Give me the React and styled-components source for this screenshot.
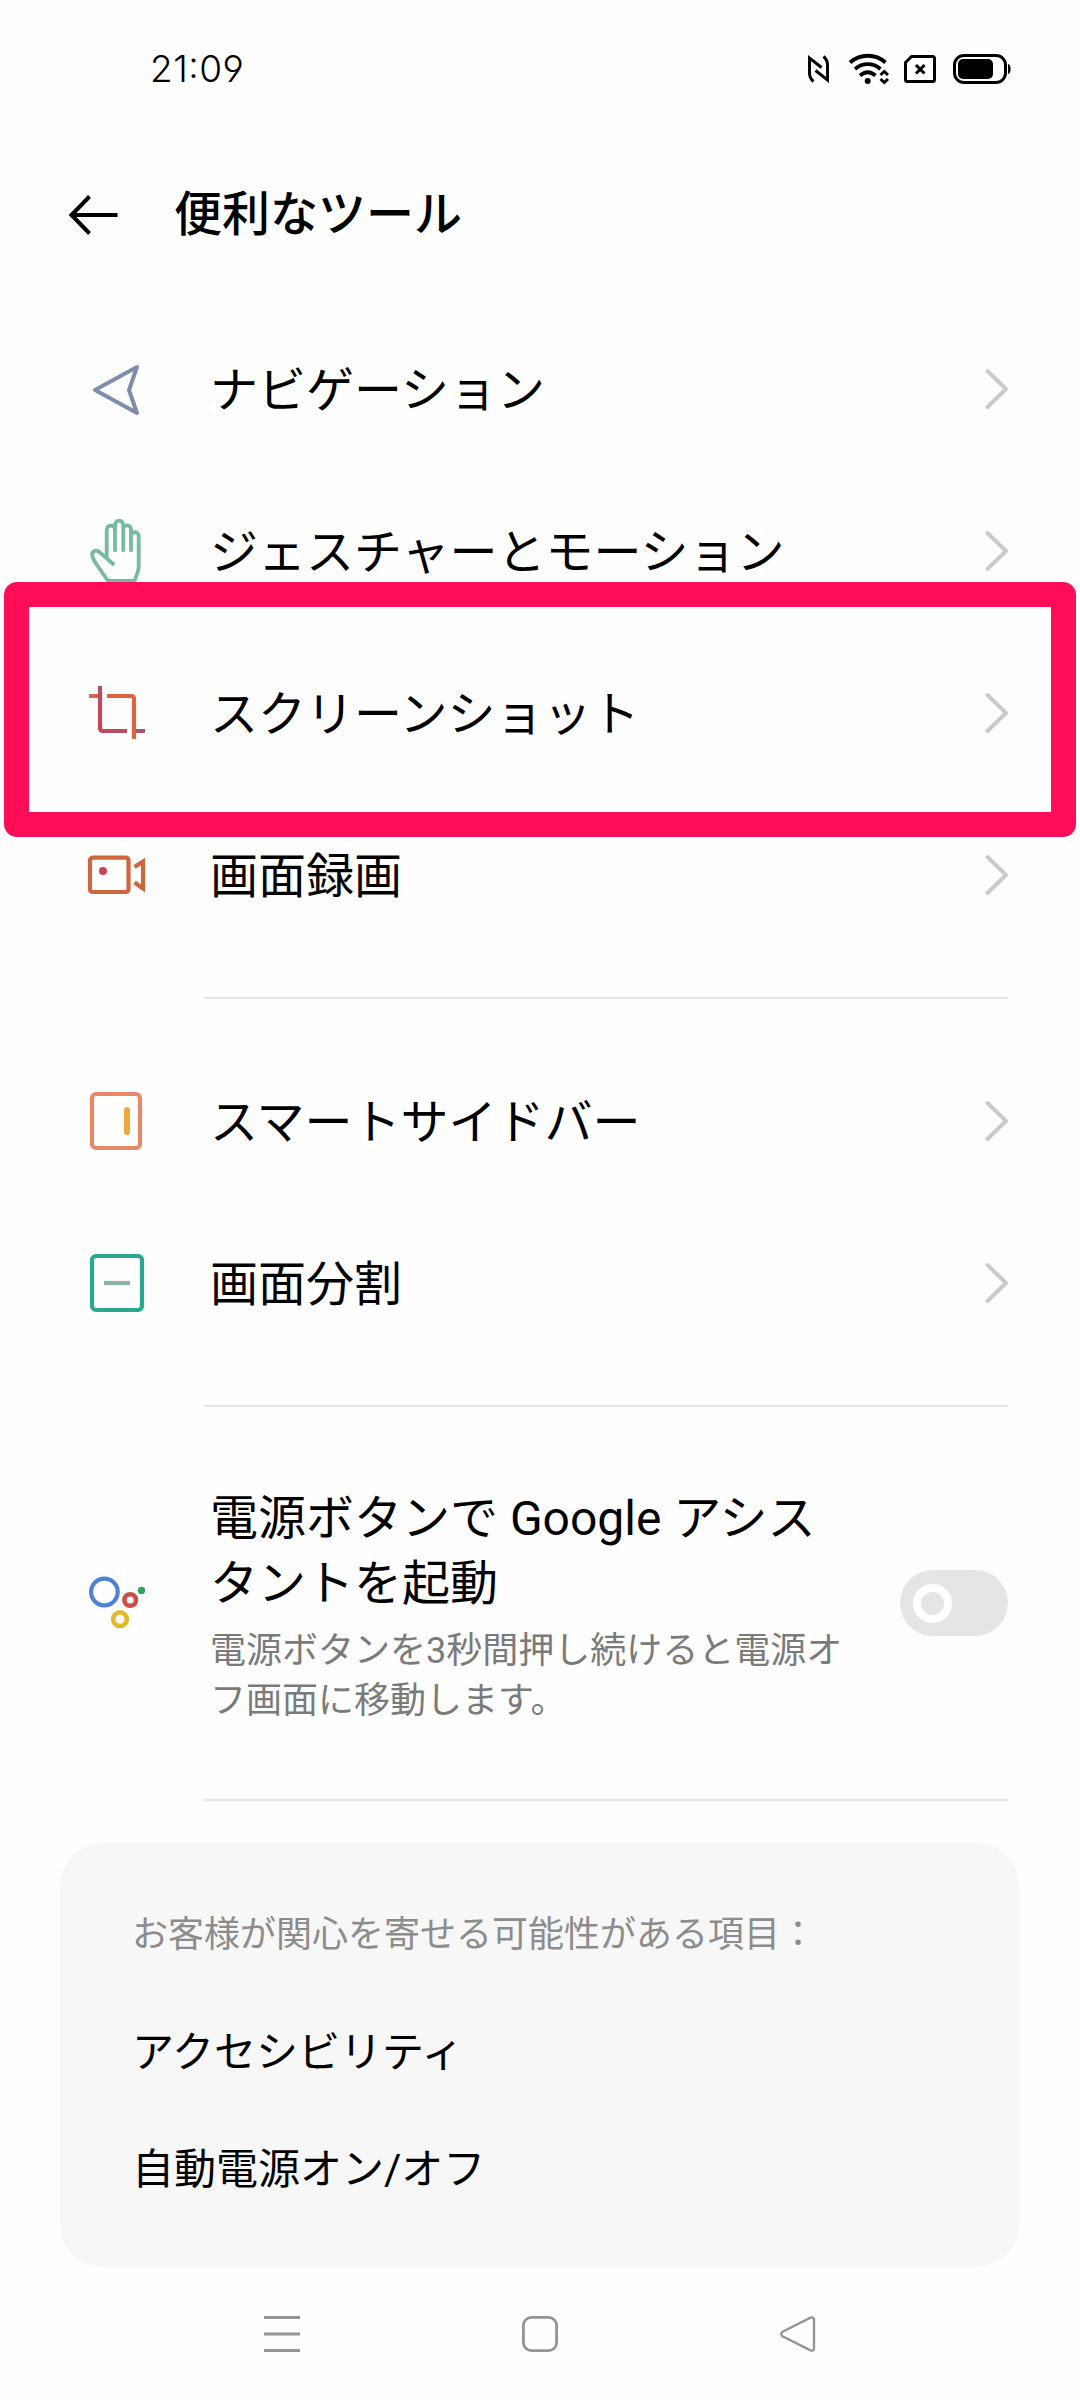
import React from 'react';
import styled, { createGlobalStyle } from 'styled-components';

const GlobalStyle = createGlobalStyle`
  *, *::before, *::after { box-sizing: border-box; }
  body {
    margin: 0;
    background: #fefefe;
    color: #000;
    font-family: Roboto, 'Noto Sans CJK JP', sans-serif;
  }
`;

const Screen = styled.div`
  width: 1080px;
  height: 2400px;
  display: flex;
  flex-direction: column;
  overflow: hidden;
  background: #fefefe;
`;

const StatusBar = styled.header`
  height: 137px;
  flex: none;
  display: flex;
  align-items: center;
  justify-content: space-between;
  padding: 0 68px 0 150px;
`;

const Clock = styled.time`
  font-family: Inter, Roboto, sans-serif;
  font-feature-settings: 'ss01', 'calt';
  font-size: 37px;
  font-weight: 360;
  line-height: 44px;
  letter-spacing: 0.5px;
`;

const StatusIcons = styled.div`
  display: flex;
  align-items: center;
`;

const Glyph = styled.svg`
  display: block;
  flex: none;
  overflow: visible;
  margin-left: ${({ $gap = 0 }) => $gap}px;
`;

const TitleBar = styled.div`
  height: 156px;
  flex: none;
  display: flex;
  align-items: center;
  gap: 57px;
  padding-left: 69px;
`;

const PageTitle = styled.h1`
  margin: 0;
  font-size: 48px;
  font-weight: 500;
  line-height: 70px;
`;

const List = styled.main`
  display: flex;
  flex-direction: column;
  padding-top: 15px;
`;

const Row = styled.div`
  position: relative;
  height: ${({ $height = 162 }) => $height}px;
  display: flex;
  align-items: center;
  padding: 0 72px 0 87px;
`;

const Texts = styled.div`
  width: 650px;
  margin-left: 63px;
  padding-top: ${({ $shift = 2 }) => $shift}px;
  display: flex;
  flex-direction: column;
  gap: 10px;
`;

const Label = styled.span`
  font-size: 48px;
  line-height: 65px;
`;

const Note = styled.span`
  font-size: 36px;
  line-height: 50px;
  color: #7a7a7a;
`;

const Trailing = styled.div`
  margin-left: auto;
`;

const Switch = styled.div`
  width: 108px;
  height: 66px;
  padding-left: 13px;
  display: flex;
  align-items: center;
  border-radius: 33px;
  background: #e5e5e5;
`;

const Knob = styled.div`
  width: 39px;
  height: 39px;
  border: 8px solid #fff;
  border-radius: 50%;
`;

const Divider = styled.hr`
  width: 804px;
  height: 2px;
  margin: 41px 72px ${({ $last }) => ($last ? 42 : 41)}px 204px;
  border: 0;
  background: #e5e5e5;
`;

const Highlight = styled.div`
  position: absolute;
  z-index: 1;
  top: -50px;
  bottom: -43px;
  left: 4px;
  right: 4px;
  border: 25px solid #ff0d59;
  border-radius: 13px;
  pointer-events: none;
`;

const Card = styled.section`
  width: 959px;
  height: 424px;
  flex: none;
  margin-left: 60px;
  padding: 28px 72px;
  display: flex;
  flex-direction: column;
  border-radius: 42px;
  background: #f7f7f7;
`;

const CardHeading = styled.div`
  height: 119px;
  display: flex;
  align-items: center;
  font-size: 36px;
  color: #8c8c8c;
`;

const CardLink = styled.div`
  height: 117px;
  display: flex;
  align-items: center;
  font-size: 42px;
`;

const NavBar = styled.nav`
  height: 133px;
  flex: none;
  display: flex;
  align-items: center;
  justify-content: center;
  gap: 222px;
`;

const RowIcon = ({ children, color }) => (
  <Glyph width="60" height="60" viewBox="0 0 60 60" fill="none" stroke={color} strokeWidth="4.2">
    {children}
  </Glyph>
);

const NavigationIcon = () => (
  <RowIcon color="#7f8cab">
    <path d="M8 31 50 8 42 31 50 54Z" strokeWidth="4" strokeLinejoin="round" />
  </RowIcon>
);

const HandIcon = () => (
  <RowIcon color="#75bb9c">
    <path
      strokeWidth="3.800"
      strokeLinejoin="round"
      d="M27.300 44 13 31.500C9 28 3.800 30.500 5.500 35.500 6.200 38 7.500 40.500 9.300 43L20 58.500Q21 60 23 60H45.500Q47.500 60 48.300 58L51 50Q51.700 47.500 51.700 45V15.200C51.700 9.800 44 9.800 44 15.200V30.700M44 30.700V8.500C44 3 36.300 3 36.300 8.500M36.300 30.700V5C36.300-2.200 28-2.200 28 5V30.700M28 9C28 3 19.700 3 19.700 9V36"
    />
  </RowIcon>
);

const CropIcon = () => (
  <RowIcon>
    <path d="M2 13H14M20 13H44Q47 13 47 16V56" stroke="#dc643f" />
    <path d="M13 3V45Q13 48 16 48H40M49 48H58" stroke="url(#cropFade)" />
    <defs>
      <linearGradient id="cropFade" gradientUnits="userSpaceOnUse" x1="13" y1="3" x2="50" y2="48">
        <stop offset="0" stopColor="#b5505f" />
        <stop offset="0.5" stopColor="#c84459" />
        <stop offset="1" stopColor="#ae5468" />
      </linearGradient>
    </defs>
  </RowIcon>
);

const RecordIcon = () => (
  <RowIcon color="#d06640">
    <rect x="3" y="12.700" width="38.500" height="34.300" rx="2.500" />
    <path d="M47.500 22 56 16.500V43.500L47.500 37.500" />
    <circle cx="16" cy="26" r="4" fill="#c4445c" stroke="none" />
  </RowIcon>
);

const SidebarIcon = () => (
  <RowIcon color="#e6896b">
    <rect x="5" y="3" width="48" height="54" rx="4" />
    <path d="M40 19V41" stroke="#edaa3c" strokeWidth="6" strokeLinecap="round" />
  </RowIcon>
);

const SplitIcon = () => (
  <RowIcon color="#2aa88f">
    <rect x="5" y="3" width="50" height="54" rx="4" />
    <path d="M17 30H43" stroke="#86b59f" />
  </RowIcon>
);

const AssistantIcon = () => (
  <RowIcon>
    <circle cx="17.400" cy="19" r="13.300" stroke="#4f83cf" />
    <circle cx="43.200" cy="27" r="5.800" stroke="#cf4d48" strokeWidth="4.600" />
    <circle cx="33" cy="46.200" r="6.800" stroke="#e3b92e" strokeWidth="4.600" />
    <circle cx="54.500" cy="17.500" r="3.700" fill="#3c9e5c" stroke="none" />
  </RowIcon>
);

const Chevron = () => (
  <Glyph width="24" height="42" viewBox="0 0 24 42" fill="none" stroke="#cacaca" strokeWidth="4" strokeLinecap="round" strokeLinejoin="round">
    <path d="M3.500 3 22 21 3.500 39" />
  </Glyph>
);

const BackArrow = () => (
  <Glyph width="48" height="40" viewBox="0 0 48 40" fill="none" stroke="#000" strokeWidth="4">
    <path d="M48.500 20H3M20.500 1.500 2.500 20 20.500 38.500" />
  </Glyph>
);

const NfcIcon = () => (
  <Glyph width="21" height="28" viewBox="0 0 21 28" fill="none" stroke="#000" strokeWidth="3">
    <path d="M5.500 26.500C2.500 24 1.500 21.500 1.500 18V3L13.500 12.500M15.500 1.500C18.500 4 19.500 6.500 19.500 10V25L7.500 15.500" />
  </Glyph>
);

const WifiIcon = () => (
  <Glyph $gap={20} width="40" height="30" viewBox="0 0 40 30" fill="none" stroke="#000" strokeWidth="3.800">
    <path d="M1 8.500C11.500-.500 26.500-.500 36.500 8.500M6 15C13.500 8.500 24 8.500 31.500 15M11 21.500C16 17.200 21.500 17.200 26.500 21.500" />
    <circle cx="18.700" cy="27" r="3" fill="#000" stroke="none" />
    <path d="M31.500 21 35.300 17.500 39 21M31.500 25 35.300 28.500 39 25" strokeWidth="2.900" />
  </Glyph>
);

const SimIcon = () => (
  <Glyph $gap={15} width="32" height="28" viewBox="0 0 32 28" fill="none" stroke="#000" strokeWidth="3">
    <path d="M7.500 1.500H28.500Q30.500 1.500 30.500 3.500V24.500Q30.500 26.500 28.500 26.500H3.500Q1.500 26.500 1.500 24.500V7.500Z" strokeLinejoin="round" />
    <path d="M12 10 20.500 18.500M20.500 10 12 18.500" />
  </Glyph>
);

const BatteryIcon = () => (
  <Glyph $gap={17} width="59" height="30" viewBox="0 0 59 30">
    <rect x="1.500" y="1.500" width="51" height="27" rx="9.500" fill="none" stroke="#000" strokeWidth="3" />
    <rect x="5" y="5" width="35" height="20" rx="5" />
    <path d="M55 10C58.500 10 58.500 20 55 20Z" />
  </Glyph>
);

const groups = [
  [
    { icon: NavigationIcon, label: 'ナビゲーション' },
    { icon: HandIcon, label: 'ジェスチャーとモーション' },
    { icon: CropIcon, label: 'スクリーンショット', highlighted: true },
    { icon: RecordIcon, label: '画面録画' },
  ],
  [
    { icon: SidebarIcon, label: 'スマートサイドバー' },
    { icon: SplitIcon, label: '画面分割' },
  ],
];

export default function App() {
  return (
    <Screen lang="ja">
      <GlobalStyle />
      <StatusBar>
        <Clock>21:09</Clock>
        <StatusIcons>
          <NfcIcon />
          <WifiIcon />
          <SimIcon />
          <BatteryIcon />
        </StatusIcons>
      </StatusBar>
      <TitleBar>
        <BackArrow />
        <PageTitle>便利なツール</PageTitle>
      </TitleBar>
      <List>
        {groups.map((rows, index) => (
          <React.Fragment key={index}>
            {rows.map(({ icon: Icon, label, highlighted }) => (
              <Row key={label}>
                <Icon />
                <Texts>
                  <Label>{label}</Label>
                </Texts>
                <Trailing>
                  <Chevron />
                </Trailing>
                {highlighted && <Highlight />}
              </Row>
            ))}
            <Divider />
          </React.Fragment>
        ))}
        <Row $height={310}>
          <AssistantIcon />
          <Texts $shift={6}>
            <Label>
              電源ボタンで Google アシス
              <br />
              タントを起動
            </Label>
            <Note>
              電源ボタンを3秒間押し続けると電源オ
              <br />
              フ画面に移動します。
            </Note>
          </Texts>
          <Trailing>
            <Switch>
              <Knob />
            </Switch>
          </Trailing>
        </Row>
        <Divider $last />
      </List>
      <Card>
        <CardHeading>お客様が関心を寄せる可能性がある項目：</CardHeading>
        <CardLink>アクセシビリティ</CardLink>
        <CardLink>自動電源オン/オフ</CardLink>
      </Card>
      <NavBar>
        <Glyph width="36" height="36" viewBox="0 0 36 36" stroke="#949494" strokeWidth="3">
          <path d="M0 1.500H36M0 18H36M0 34.500H36" />
        </Glyph>
        <Glyph width="36" height="36" viewBox="0 0 36 36" fill="none" stroke="#949494" strokeWidth="2.800">
          <rect x="1.400" y="1.400" width="33.200" height="33.200" rx="8" />
        </Glyph>
        <Glyph width="36" height="36" viewBox="0 0 36 36" fill="none" stroke="#949494" strokeWidth="2.400">
          <path d="M2.500 15.800 30.500 1.600Q34 .500 34 4V32Q34 35.500 30.500 34.400L2.500 20.200Q0 18 2.500 15.800Z" />
        </Glyph>
      </NavBar>
    </Screen>
  );
}
